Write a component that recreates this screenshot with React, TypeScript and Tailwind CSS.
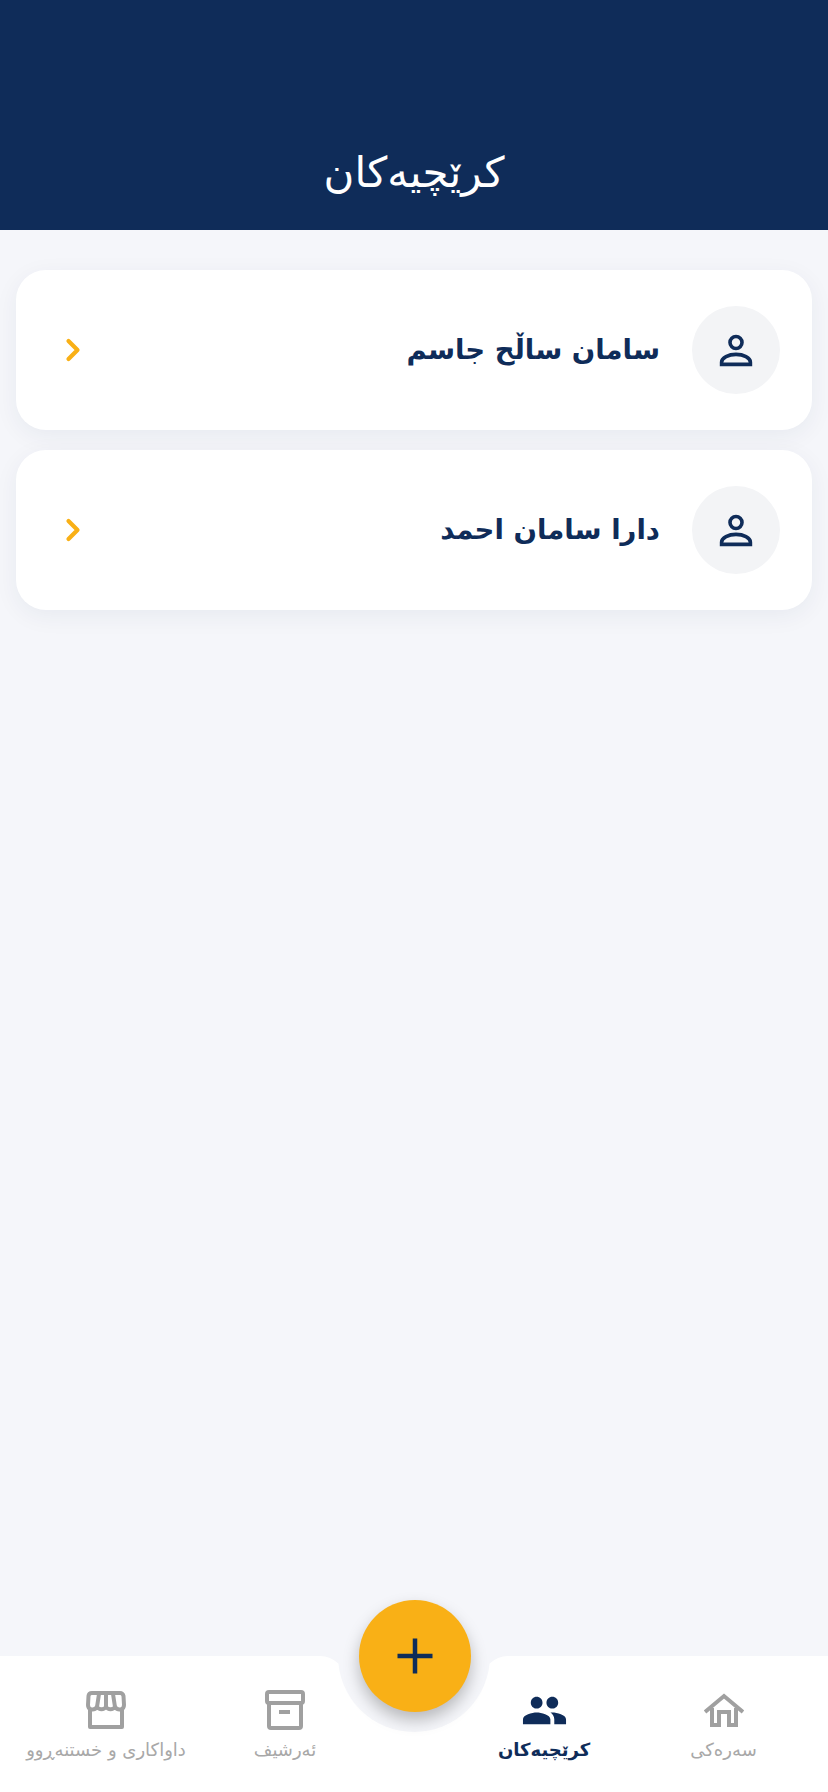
import { ChevronRight, Plus } from "lucide-react";
import { MdPeople } from "react-icons/md";

const FONT = "font-['DejaVu_Sans','Noto_Sans',sans-serif]";

const tenants = ["سامان ساڵح جاسم", "دارا سامان احمد"];

function PersonIcon() {
  return (
    <svg width="36" height="36" viewBox="0 0 36 36" fill="none" stroke="#0f2c59" strokeWidth="3.6">
      <circle cx="18" cy="10.5" r="6" />
      <path d="M3.6 32.4h28.8v-2.2c0-4.6-7-7.8-14.4-7.8S3.6 25.6 3.6 30.2z" />
    </svg>
  );
}

function StoreIcon() {
  return (
    <svg width="40" height="38" viewBox="0 0 40 38" fill="none" stroke="#a0a0a0" strokeWidth="4" strokeLinejoin="round">
      <path d="M6 2h28c2 0 3 1 3.500 3L38 14c0 5-6 6-9 2-2 3-7 3-9 0-2 3-7 3-9 0-3 4-9 3-9-2l.5-9C2.700 3 4 2 6 2z" />
      <path d="M13 3l-2 13M20 3v13M27 3l2 13" />
      <path d="M4 19v17h32V19" />
    </svg>
  );
}

function ArchiveIcon() {
  return (
    <svg width="40" height="40" viewBox="0 0 40 40" fill="none" stroke="#a0a0a0" strokeWidth="4" strokeLinejoin="round">
      <rect x="2" y="2" width="36" height="11" rx="2" />
      <rect x="4" y="13" width="32" height="25" rx="2" />
      <path d="M14 22h11" />
    </svg>
  );
}

function HomeIcon() {
  return (
    <svg width="40" height="34" viewBox="0 0 40 34" fill="none" stroke="#a0a0a0" strokeWidth="4">
      <path d="M1 19L20 3l19 16" />
      <path d="M8 15v17h7V19h10v13h7V15" />
    </svg>
  );
}

function TenantCard({ name }: { name: string }) {
  return (
    <div className="h-[160px] rounded-[30px] bg-white shadow-[0_6px_24px_rgba(15,44,89,0.06)] pl-[39px] pr-[32px] flex items-center justify-between">
      <ChevronRight size={36} strokeWidth={2.8} className="text-[#f9b016]" />
      <div className="flex items-center gap-[32px]">
        <span dir="rtl" className="text-[27.5px] font-bold text-[#0f2c59]">
          {name}
        </span>
        <div className="w-[88px] h-[88px] rounded-full bg-[#f3f4f6] flex items-center justify-center">
          <PersonIcon />
        </div>
      </div>
    </div>
  );
}

function NavItem({ label, icon, active, className }: { label: string; icon: React.ReactNode; active?: boolean; className: string }) {
  return (
    <div className={`flex flex-col items-center ${className}`}>
      <div className="h-[44px] flex items-center justify-center">{icon}</div>
      <span dir="rtl" className={`mt-[4px] text-[18px] whitespace-nowrap ${active ? "font-semibold text-[#0f2c59]" : "text-[#a8a8a8]"}`}>
        {label}
      </span>
    </div>
  );
}

export default function App() {
  return (
    <div className={`relative h-[1792px] bg-[#f5f6fa] flex flex-col overflow-hidden ${FONT}`}>
      <header className="h-[230px] bg-[#0f2c59] flex items-end justify-center pb-[26px]">
        <h1 dir="rtl" className="text-[42px] font-normal text-white">
          کرێچیەکان
        </h1>
      </header>

      <main className="flex-1 px-[16px] pt-[40px] flex flex-col gap-[20px]">
        {tenants.map((t) => (
          <TenantCard key={t} name={t} />
        ))}
      </main>

      {/* Bottom nav with notch */}
      <nav className="relative h-[136px] flex">
        <div className="w-[346px] bg-white rounded-tr-[26px] flex pt-[32px] pl-[25px]">
          <NavItem className="w-[162px]" label="داواکاری و خستنەڕوو" icon={<StoreIcon />} />
          <NavItem className="w-[64px] ml-[66px]" label="ئەرشیف" icon={<ArchiveIcon />} />
        </div>
        <div className="flex-1 mt-[24px] bg-white" />
        <div className="w-[346px] bg-white rounded-tl-[26px] flex pt-[32px] pl-[17px]">
          <NavItem
            className="w-[90px]"
            label="کرێچیەکان"
            active
            icon={<MdPeople size={47} color="#0f2c59" />}
          />
          <NavItem className="w-[67px] ml-[101px]" label="سەرەکی" icon={<HomeIcon />} />
        </div>
        <div className="absolute left-[338px] top-[-76px] w-[152px] h-[152px] rounded-full bg-[#f5f6fa]" />
        <button className="absolute left-[359px] top-[-56px] w-[112px] h-[112px] rounded-full bg-[#f9b016] shadow-[0_8px_16px_rgba(0,0,0,0.25)] flex items-center justify-center">
          <Plus size={60} strokeWidth={1.8} strokeLinecap="butt" className="text-[#0f2c59]" />
        </button>
      </nav>
    </div>
  );
}
